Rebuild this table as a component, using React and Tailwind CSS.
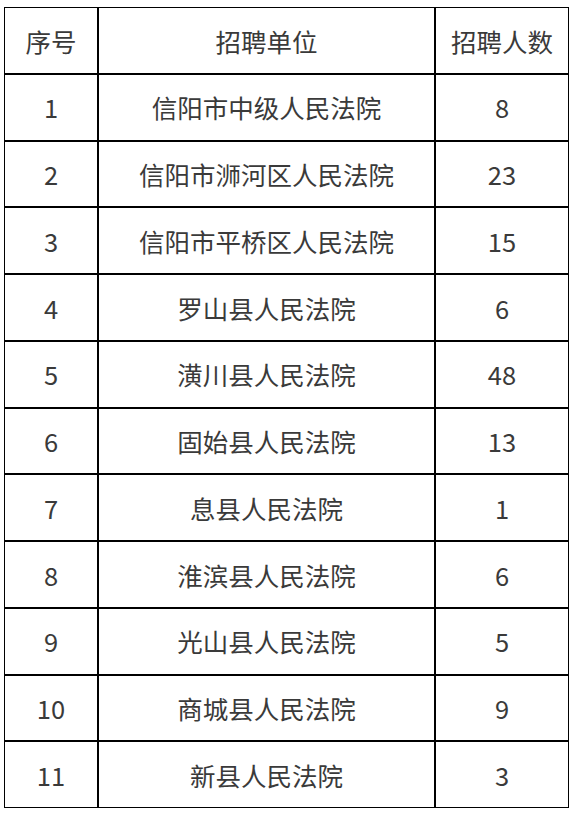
const rows = [
  ['1', '信阳市中级人民法院', '8'],
  ['2', '信阳市浉河区人民法院', '23'],
  ['3', '信阳市平桥区人民法院', '15'],
  ['4', '罗山县人民法院', '6'],
  ['5', '潢川县人民法院', '48'],
  ['6', '固始县人民法院', '13'],
  ['7', '息县人民法院', '1'],
  ['8', '淮滨县人民法院', '6'],
  ['9', '光山县人民法院', '5'],
  ['10', '商城县人民法院', '9'],
  ['11', '新县人民法院', '3'],
];

function Row({ cells, last }) {
  return (
    <div className={`flex-1 grid grid-cols-[94px_337px_1fr] ${last ? '' : 'border-b-2 border-black'}`}>
      <div className="flex items-center justify-center border-r-2 border-black">{cells[0]}</div>
      <div className="flex items-center justify-center border-r-2 border-black">{cells[1]}</div>
      <div className="flex items-center justify-center">{cells[2]}</div>
    </div>
  );
}

export default function App() {
  return (
    <div className="w-[579px] h-[819px] bg-white pt-[7px] pl-[4px]">
      <div
        className="w-[565px] h-[801px] border border-black flex flex-col text-[25.5px] text-[#3a3a3a] leading-none"
        style={{ fontFamily: '"Noto Sans CJK SC", "Noto Sans", sans-serif' }}
      >
        <Row cells={['序号', '招聘单位', '招聘人数']} />
        {rows.map((r, i) => (
          <Row key={r[0]} cells={r} last={i === rows.length - 1} />
        ))}
      </div>
    </div>
  );
}
